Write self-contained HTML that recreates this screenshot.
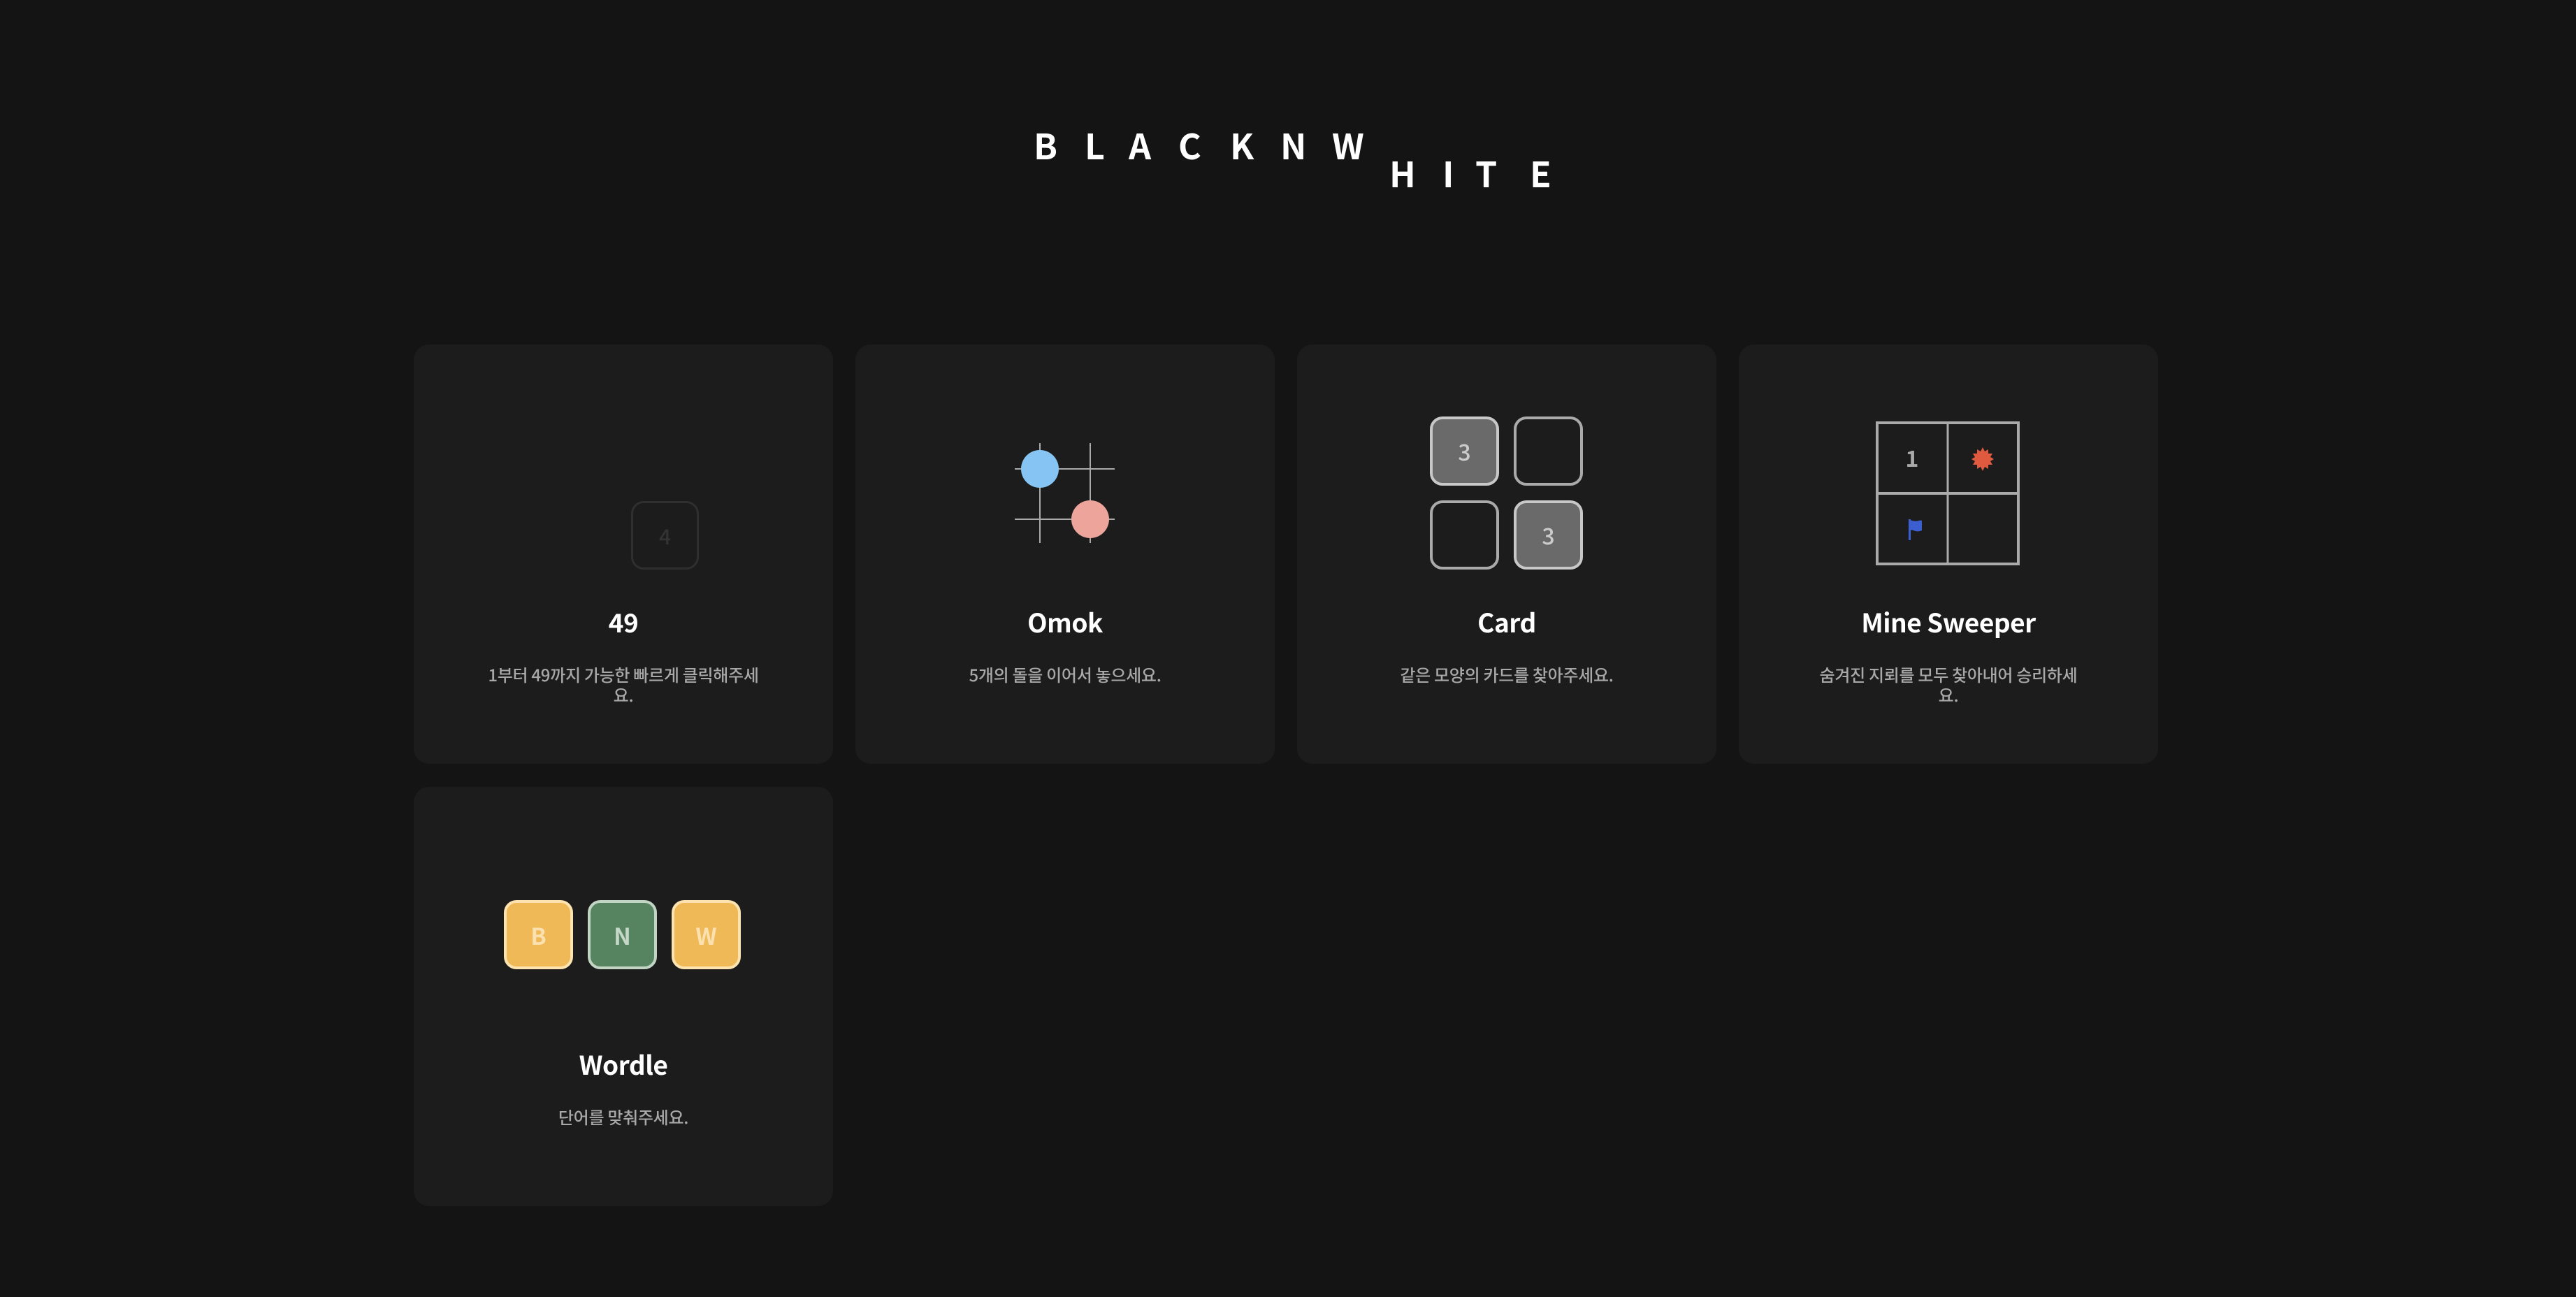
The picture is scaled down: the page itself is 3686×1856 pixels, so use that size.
<!DOCTYPE html>
<html><head><meta charset="utf-8"><style>
*{margin:0;padding:0;box-sizing:border-box}
body{width:3686px;height:1856px;background:#141414;position:relative;overflow:hidden;font-family:"Liberation Sans","Noto Sans CJK KR",sans-serif}
.L{position:absolute;font-family:"Noto Sans CJK KR",sans-serif;font-size:50px;line-height:50px;font-weight:700;color:#fff}
.card{position:absolute;width:600px;height:600px;background:#1c1c1c;border-radius:22px}
.t{position:absolute;left:0;width:100%;top:377px;text-align:center;font-family:"Noto Sans CJK KR",sans-serif;font-weight:700;font-size:37px;line-height:38px;color:#fff;letter-spacing:-0.5px}
.d{position:absolute;left:105px;width:390px;top:457px;text-align:center;font-family:"Noto Sans CJK KR",sans-serif;font-weight:500;font-size:24px;line-height:29px;color:#a8a8a8;letter-spacing:-0.3px}
.ab{position:absolute}
.tile{position:absolute;width:99px;height:99px;border-radius:18px;display:flex;align-items:center;justify-content:center;font-family:"Noto Sans CJK KR",sans-serif;font-weight:700;font-size:33px}
</style></head><body>
<div class="L" style="left:1479px;top:182px">B</div>
<div class="L" style="left:1552px;top:182px">L</div>
<div class="L" style="left:1615px;top:182px">A</div>
<div class="L" style="left:1686px;top:182px">C</div>
<div class="L" style="left:1760px;top:182px">K</div>
<div class="L" style="left:1832px;top:182px">N</div>
<div class="L" style="left:1906px;top:182px">W</div>
<div class="L" style="left:1988px;top:222px">H</div>
<div class="L" style="left:2064px;top:222px">I</div>
<div class="L" style="left:2111px;top:222px">T</div>
<div class="L" style="left:2189px;top:222px">E</div>

<div class="card" style="left:592px;top:493px">
<div class="tile" style="left:311px;top:224px;width:97px;height:98px;border:3px solid #2f2f2f;color:#333;font-weight:500;font-size:30px">4</div>
<div class="t">49</div>
<div class="d">1부터 49까지 가능한 빠르게 클릭해주세요.</div>
</div>

<div class="card" style="left:1224px;top:493px">
<svg class="ab" style="left:0;top:0" width="600" height="600">
<g stroke="#aaa" stroke-width="2"><line x1="264" y1="141" x2="264" y2="284"/><line x1="336" y1="141" x2="336" y2="284"/><line x1="228" y1="178" x2="371" y2="178"/><line x1="228" y1="250" x2="371" y2="250"/></g>
<circle cx="264" cy="178" r="27" fill="#86c5f3"/><circle cx="336" cy="250" r="27" fill="#eda59b"/>
</svg>
<div class="t">Omok</div>
<div class="d">5개의 돌을 이어서 놓으세요.</div>
</div>

<div class="card" style="left:1856px;top:493px">
<div class="tile" style="left:190px;top:103px;background:#6a6a6a;border:4px solid #c8c8c8;color:#ccc;font-weight:500;font-size:32px">3</div>
<div class="tile" style="left:310px;top:103px;border:4px solid #aaa"></div>
<div class="tile" style="left:190px;top:223px;border:4px solid #aaa"></div>
<div class="tile" style="left:310px;top:223px;background:#6a6a6a;border:4px solid #c8c8c8;color:#ccc;font-weight:500;font-size:32px">3</div>
<div class="t">Card</div>
<div class="d">같은 모양의 카드를 찾아주세요.</div>
</div>

<div class="card" style="left:2488px;top:493px">
<svg class="ab" style="left:196px;top:110px" width="206" height="206">
<rect x="2" y="2" width="202" height="202" fill="none" stroke="#aaa" stroke-width="4"/>
<line x1="103" y1="2" x2="103" y2="204" stroke="#aaa" stroke-width="3"/>
<line x1="2" y1="103" x2="204" y2="103" stroke="#aaa" stroke-width="4"/>
<text x="52" y="65" text-anchor="middle" font-family="Noto Sans CJK KR,sans-serif" font-size="32" font-weight="700" fill="#aaa">1</text>
<polygon fill="#e05a40" points="153,37 156,43 161,40 161,46 167,46 164,51 169,54 164,57 167,62 161,62 161,68 156,65 153,71 150,65 145,68 145,62 139,62 142,57 137,54 142,51 139,46 145,46 145,40 150,43"/>
<rect x="47" y="140" width="3" height="30" fill="#3b5fd0"/>
<path d="M49 141 Q56 144 62 142 Q66 141 66 143 L66 156 Q60 159 54 156 Q51 155 49 156 Z" fill="#3b5fd0"/>
</svg>
<div class="t">Mine Sweeper</div>
<div class="d">숨겨진 지뢰를 모두 찾아내어 승리하세요.</div>
</div>

<div class="card" style="left:592px;top:1126px">
<div class="tile" style="left:129px;top:162px;background:#f0b957;border:4px solid #fde3b0;color:#fbe0b0">B</div>
<div class="tile" style="left:249px;top:162px;background:#578460;border:4px solid #c2d4c4;color:#c5d8c8">N</div>
<div class="tile" style="left:369px;top:162px;background:#f0b957;border:4px solid #fde3b0;color:#fbe0b0">W</div>
<div class="t">Wordle</div>
<div class="d">단어를 맞춰주세요.</div>
</div>
</body></html>
